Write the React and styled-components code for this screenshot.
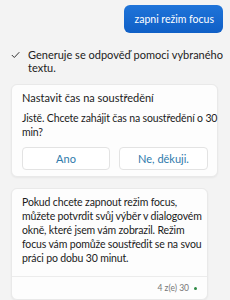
import React from 'react';
import styled, { createGlobalStyle } from 'styled-components';

const GlobalStyle = createGlobalStyle`
  html, body {
    margin: 0;
    padding: 0;
    background: #f3f3f3;
  }
  body {
    font-family: Lato, "Noto Sans", sans-serif;
    color: #1b1b1b;
  }
`;

const Page = styled.div`
  width: 230px;
  height: 300px;
  overflow: hidden;
  display: flex;
  flex-direction: column;
  padding: 5px 7px 0 11px;
  box-sizing: border-box;
`;

const UserRow = styled.div`
  display: flex;
  justify-content: flex-end;
`;

const UserBubble = styled.div`
  height: 28px;
  padding: 0 9px 0 10px;
  display: flex;
  align-items: center;
  border-radius: 6px;
  background: linear-gradient(180deg, #1f74d9 0%, #0f5fc6 100%);
  color: #fff;
  font-size: 10.5px;
`;

const Status = styled.div`
  display: flex;
  align-items: flex-start;
  gap: 8px;
  margin: 15px 0 10px 0;
  font-size: 11px;
  line-height: 13px;
  color: #222;
`;

const CheckIcon = styled.svg`
  flex: none;
  width: 9px;
  height: 13px;
`;

const Card = styled.div`
  width: ${p => p.$width}px;
  box-sizing: border-box;
  background: #fdfdfd;
  border: 1px solid #e9e9e9;
  border-radius: 6px;
  box-shadow: 0 1px 2px rgba(0, 0, 0, 0.05);
  margin-bottom: 11px;
`;

const CardBody = styled.div`
  padding: 6px 6px 6px 10px;
  display: flex;
  flex-direction: column;
`;

const CardTitle = styled.div`
  font-size: 11px;
  line-height: 14px;
  margin-bottom: 6px;
`;

const Text = styled.div`
  font-size: 10.5px;
  line-height: 14px;
  letter-spacing: -0.15px;
  white-space: nowrap;
`;

const Buttons = styled.div`
  display: grid;
  grid-template-columns: 88px 89px;
  gap: 9px;
  margin-top: 8px;
`;

const Button = styled.button`
  height: 23px;
  border: 1px solid #e3e3e3;
  border-radius: 4px;
  background: #fff;
  color: #2f7aab;
  font-family: inherit;
  font-size: 11px;
  padding: 0;
`;

const Footer = styled.div`
  border-top: 1px solid #ececec;
  margin-top: 5px;
  height: 22px;
  display: flex;
  align-items: center;
  justify-content: flex-end;
  gap: 5px;
  padding-right: 10px;
  font-size: 8.5px;
  color: #777;
`;

const Dot = styled.span`
  width: 3px;
  height: 3px;
  border-radius: 50%;
  background: #2e8a45;
`;

export default function App() {
  return (
    <>
      <GlobalStyle />
      <Page>
        <UserRow>
          <UserBubble>zapni režim focus</UserBubble>
        </UserRow>
        <Status>
          <CheckIcon viewBox="0 0 9 13">
            <path d="M0.8 7 L3.3 9.5 L8.3 4.2" fill="none" stroke="#333" strokeWidth="1" />
          </CheckIcon>
          <span>Generuje se odpověď pomoci vybraného textu.</span>
        </Status>
        <Card $width={207}>
          <CardBody>
            <CardTitle>Nastavit čas na soustředění</CardTitle>
            <Text>Jistě. Chcete zahájit čas na soustředění o 30<br />min?</Text>
            <Buttons>
              <Button>Ano</Button>
              <Button>Ne, děkuji.</Button>
            </Buttons>
          </CardBody>
        </Card>
        <Card $width={197}>
          <CardBody>
            <Text>
              Pokud chcete zapnout režim focus,<br />
              můžete potvrdit svůj výběr v dialogovém<br />
              okně, které jsem vám zobrazil. Režim<br />
              focus vám pomůže soustředit se na svou<br />
              práci po dobu 30 minut.
            </Text>
          </CardBody>
          <Footer>
            <span>4 z(e) 30</span>
            <Dot />
          </Footer>
        </Card>
      </Page>
    </>
  );
}
